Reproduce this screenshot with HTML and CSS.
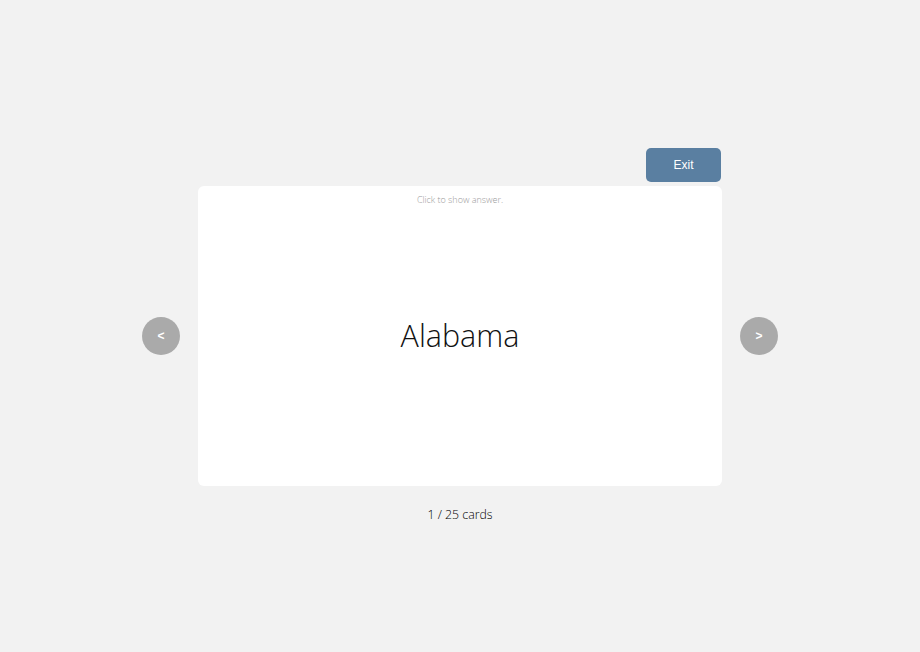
FILE: index.html
```html
<!DOCTYPE html>
<html>
<head>
<meta charset="utf-8">
<link rel="stylesheet" href="styles.css">
</head>
<body>
<div class="page">
  <div class="top">
    <button class="exit">Exit</button>
  </div>
  <div class="stage">
    <button class="nav">&lt;</button>
    <div class="card">
      <div class="hint">Click to show answer.</div>
      <div class="term">Alabama</div>
    </div>
    <button class="nav">&gt;</button>
  </div>
  <div class="count">1 / 25 cards</div>
</div>
</body>
</html>
```
FILE: styles.css
```css
html, body {
  margin: 0;
  padding: 0;
  background: #f2f2f2;
  font-family: "Open Sans", "Liberation Sans", sans-serif;
}
.page {
  display: flex;
  flex-direction: column;
  align-items: center;
  padding-top: 148px;
}
.top {
  width: 524px;
  display: flex;
  justify-content: flex-end;
  margin-bottom: 4px;
}
.exit {
  width: 75px;
  height: 34px;
  margin-right: 1px;
  border: none;
  border-radius: 5px;
  background: #5a7fa1;
  color: #fff;
  font-family: "Liberation Sans", Arial, sans-serif;
  font-size: 12px;
  padding: 0;
}
.stage {
  display: flex;
  align-items: center;
  gap: 18px;
}
.nav {
  width: 38px;
  height: 38px;
  border-radius: 50%;
  border: none;
  background: #aaaaaa;
  color: #fff;
  font-family: "Liberation Sans", Arial, sans-serif;
  font-weight: bold;
  font-size: 12px;
  padding: 0;
  margin-top: -1px;
}
.card {
  width: 524px;
  height: 300px;
  background: #fff;
  border-radius: 6px;
  display: flex;
  flex-direction: column;
  align-items: center;
}
.hint {
  margin-top: 7px;
  font-size: 9px;
  font-weight: 300;
  color: #9a9a9a;
  line-height: 13px;
}
.term {
  margin-top: 110px;
  font-size: 30.5px;
  font-weight: 300;
  color: #111;
  line-height: 38px;
}
.count {
  margin-top: 20px;
  font-size: 12.3px;
  font-weight: 300;
  color: #000;
  line-height: 18px;
}
```
